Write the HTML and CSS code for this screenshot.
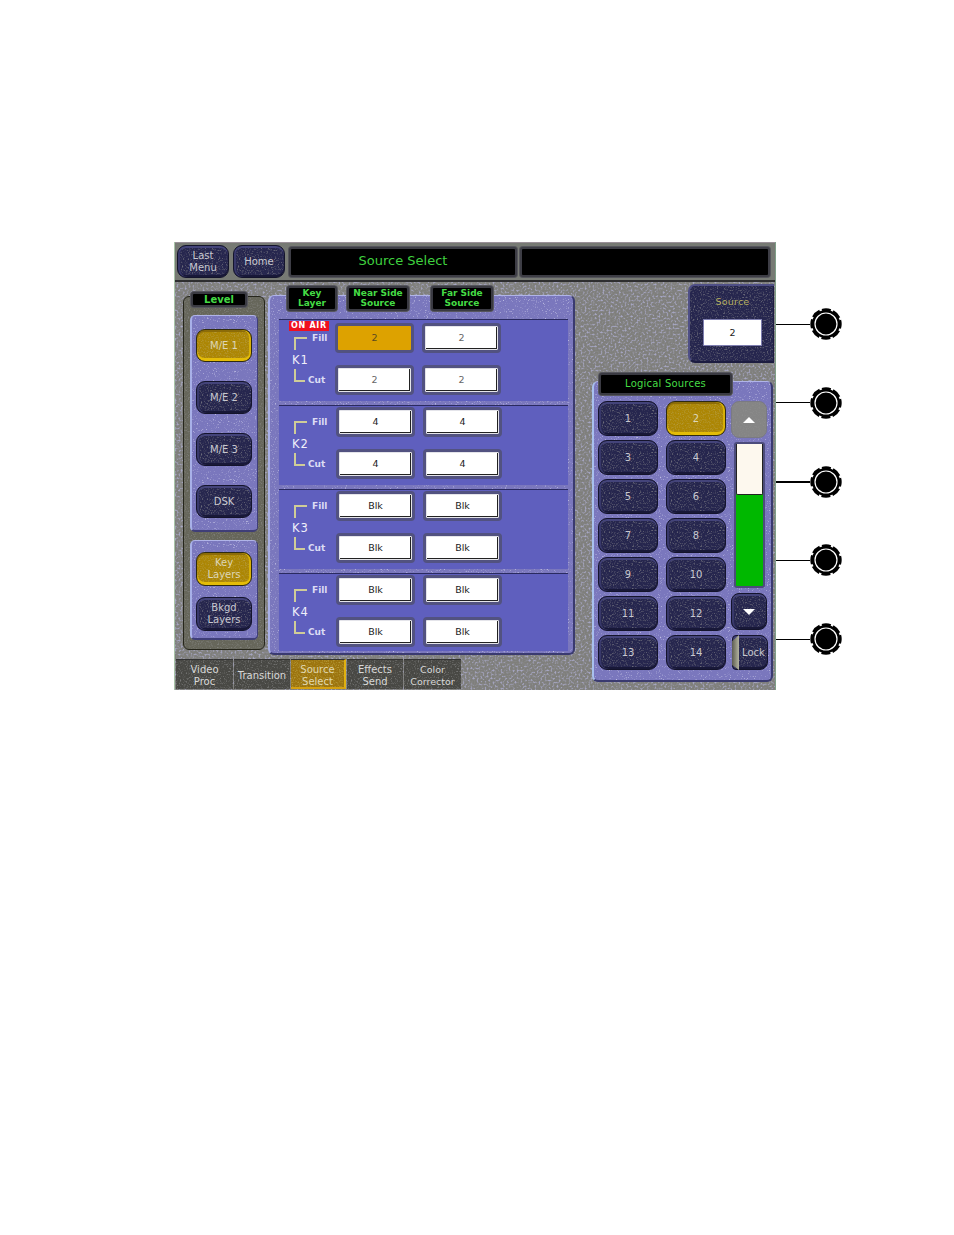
FILE: index.html
```html
<!DOCTYPE html>
<html lang="en">
<head>
<meta charset="utf-8">
<title>Source Select</title>
<link rel="stylesheet" href="styles.css">
</head>
<body>
<svg class="defs" width="0" height="0" aria-hidden="true">
  <symbol id="knob" viewBox="0 0 32 32">
    <circle cx="16" cy="16" r="14" fill="#000"/>
    <circle cx="16" cy="16" r="14.4" fill="none" stroke="#000" stroke-width="2.6" stroke-dasharray="8.9 2.4" stroke-dashoffset="4.45"/>
    <circle cx="16" cy="16" r="11" fill="none" stroke="#fff" stroke-width="1.2"/>
  </symbol>
</svg>
<div class="page">
  <div class="screen">
    <header class="topbar">
      <button class="btn btn-last">Last<br>Menu</button>
      <button class="btn btn-home">Home</button>
      <div class="display display-title">Source Select</div>
      <div class="display display-blank"></div>
    </header>
    <div class="workspace">
      <div class="left-col">
        <div class="upper">
          <aside class="level">
            <div class="tag tag-level">Level</div>
            <div class="level-group level-group-a">
              <button class="btn btn-side on">M/E 1</button>
              <button class="btn btn-side">M/E 2</button>
              <button class="btn btn-side">M/E 3</button>
              <button class="btn btn-side">DSK</button>
            </div>
            <div class="level-group level-group-b">
              <button class="btn btn-side btn-tall on">Key<br>Layers</button>
              <button class="btn btn-side btn-tall">Bkgd<br>Layers</button>
            </div>
          </aside>
          <section class="keys">
            <div class="tag tag-key">Key<br>Layer</div>
            <div class="tag tag-near">Near Side<br>Source</div>
            <div class="tag tag-far">Far Side<br>Source</div>
            <div class="key-row key-row-first">
              <div class="on-air">ON AIR</div>
              <div class="key-label">
                <div class="key-line key-line-fill"><span class="bracket bracket-top"></span><span class="key-text">Fill</span></div>
                <div class="key-name">K1</div>
                <div class="key-line key-line-cut"><span class="bracket bracket-bottom"></span><span class="key-text">Cut</span></div>
              </div>
              <div class="cells">
                <div class="cell cell-on">2</div><div class="cell cell-grey">2</div>
                <div class="cell cell-grey">2</div><div class="cell cell-grey">2</div>
              </div>
            </div>
            <div class="key-row">
              <div class="key-label">
                <div class="key-line key-line-fill"><span class="bracket bracket-top"></span><span class="key-text">Fill</span></div>
                <div class="key-name">K2</div>
                <div class="key-line key-line-cut"><span class="bracket bracket-bottom"></span><span class="key-text">Cut</span></div>
              </div>
              <div class="cells">
                <div class="cell">4</div><div class="cell">4</div>
                <div class="cell">4</div><div class="cell">4</div>
              </div>
            </div>
            <div class="key-row">
              <div class="key-label">
                <div class="key-line key-line-fill"><span class="bracket bracket-top"></span><span class="key-text">Fill</span></div>
                <div class="key-name">K3</div>
                <div class="key-line key-line-cut"><span class="bracket bracket-bottom"></span><span class="key-text">Cut</span></div>
              </div>
              <div class="cells">
                <div class="cell">Blk</div><div class="cell">Blk</div>
                <div class="cell">Blk</div><div class="cell">Blk</div>
              </div>
            </div>
            <div class="key-row key-row-last">
              <div class="key-label">
                <div class="key-line key-line-fill"><span class="bracket bracket-top"></span><span class="key-text">Fill</span></div>
                <div class="key-name">K4</div>
                <div class="key-line key-line-cut"><span class="bracket bracket-bottom"></span><span class="key-text">Cut</span></div>
              </div>
              <div class="cells">
                <div class="cell">Blk</div><div class="cell">Blk</div>
                <div class="cell">Blk</div><div class="cell">Blk</div>
              </div>
            </div>
          </section>
        </div>
        <nav class="tabs">
          <div class="tab tab-a">Video<br>Proc</div>
          <div class="tab tab-b">Transition</div>
          <div class="tab tab-c tab-on">Source<br>Select</div>
          <div class="tab tab-b">Effects<br>Send</div>
          <div class="tab tab-a">Color<br>Corrector</div>
        </nav>
      </div>
      <div class="right-col">
        <div class="source">
          <div class="source-label">Source</div>
          <div class="source-value">2</div>
        </div>
        <section class="logical">
          <div class="tag tag-logical">Logical Sources</div>
          <div class="pad">
            <button class="btn btn-num">1</button>
            <button class="btn btn-num on">2</button>
            <button class="btn btn-num">3</button>
            <button class="btn btn-num">4</button>
            <button class="btn btn-num">5</button>
            <button class="btn btn-num">6</button>
            <button class="btn btn-num">7</button>
            <button class="btn btn-num">8</button>
            <button class="btn btn-num">9</button>
            <button class="btn btn-num">10</button>
            <button class="btn btn-num">11</button>
            <button class="btn btn-num">12</button>
            <button class="btn btn-num">13</button>
            <button class="btn btn-num">14</button>
          </div>
          <div class="scroller">
            <button class="btn btn-arrow btn-up" aria-label="Up"><span class="tri tri-up"></span></button>
            <div class="track"><div class="thumb"></div></div>
            <button class="btn btn-arrow btn-down" aria-label="Down"><span class="tri tri-down"></span></button>
            <button class="btn btn-lock">Lock</button>
          </div>
        </section>
      </div>
    </div>
  </div>
  <div class="callouts">
    <div class="callout"><span class="lead"></span><svg class="knob"><use href="#knob"/></svg></div>
    <div class="callout"><span class="lead"></span><svg class="knob"><use href="#knob"/></svg></div>
    <div class="callout"><span class="lead lead-thick"></span><svg class="knob"><use href="#knob"/></svg></div>
    <div class="callout"><span class="lead"></span><svg class="knob"><use href="#knob"/></svg></div>
    <div class="callout"><span class="lead"></span><svg class="knob"><use href="#knob"/></svg></div>
  </div>
</div>
</body>
</html>
```
FILE: styles.css
```css
:root {
  --n-light: url("data:image/svg+xml,%3Csvg xmlns='http://www.w3.org/2000/svg' width='160' height='160'%3E%3Cfilter id='n'%3E%3CfeTurbulence type='fractalNoise' baseFrequency='.9' numOctaves='2' stitchTiles='stitch'/%3E%3CfeColorMatrix values='0 0 0 0 .8 0 0 0 0 .8 0 0 0 0 .95 2.4 0 0 0 -1.45'/%3E%3C/filter%3E%3Crect width='160' height='160' filter='url(%23n)'/%3E%3C/svg%3E");
  --n-dark: url("data:image/svg+xml,%3Csvg xmlns='http://www.w3.org/2000/svg' width='160' height='160'%3E%3Cfilter id='n'%3E%3CfeTurbulence type='fractalNoise' baseFrequency='.7' numOctaves='2' stitchTiles='stitch'/%3E%3CfeColorMatrix values='0 0 0 0 .28 0 0 0 0 .28 0 0 0 0 .28 2 0 0 0 -1.02'/%3E%3C/filter%3E%3Crect width='160' height='160' filter='url(%23n)'/%3E%3C/svg%3E");
  --n-gray: url("data:image/svg+xml,%3Csvg xmlns='http://www.w3.org/2000/svg' width='200' height='200'%3E%3Cfilter id='n'%3E%3CfeTurbulence type='fractalNoise' baseFrequency='.5' numOctaves='2' stitchTiles='stitch'/%3E%3CfeColorMatrix values='0 0 0 0 .38 0 0 0 0 .38 0 0 0 0 .54 3.4 0 0 0 -1.6'/%3E%3C/filter%3E%3Crect width='200' height='200' filter='url(%23n)'/%3E%3C/svg%3E");
  --n-gold: url("data:image/svg+xml,%3Csvg xmlns='http://www.w3.org/2000/svg' width='160' height='160'%3E%3Cfilter id='n'%3E%3CfeTurbulence type='fractalNoise' baseFrequency='.8' numOctaves='2' stitchTiles='stitch'/%3E%3CfeColorMatrix values='0 0 0 0 .46 0 0 0 0 .32 0 0 0 0 .04 3 0 0 0 -1.4'/%3E%3C/filter%3E%3Crect width='160' height='160' filter='url(%23n)'/%3E%3C/svg%3E");
  --periwinkle: #7a77bd;
  --navy: #26264e;
}
* { box-sizing: border-box; }
html, body { margin: 0; background: #fff; }
body { font-family: "DejaVu Sans", sans-serif; overflow: hidden; height: 1235px; }
.defs { position: absolute; }
.page { display: flex; align-items: flex-start; padding: 242px 0 0 174px; }

.screen {
  width: 602px; height: 448px; flex: none;
  display: flex; flex-direction: column;
  background: #7f7f7c var(--n-gray);
  border-left: 1px solid #a8c4a8;
  border-right: 1px solid #7f9f88;
}

.topbar {
  height: 40px; flex: none;
  display: flex; gap: 4px; padding: 2px 3px 0 2px;
  background: #777a74;
  border-top: 1px solid #9a9098;
  border-bottom: 2px solid #2e2e30;
}
.display {
  height: 30px; margin-top: 2px;
  background: #000;
  border: 2px solid #3d3d45;
  border-radius: 3px;
  box-shadow: 0 0 0 1px #55555c;
}
.display-title {
  width: 228px; color: #3fd13f;
  font-size: 13px; line-height: 24px; text-align: center;
}
.display-blank { width: 250px; margin-left: -1px; }

.btn {
  display: block; padding: 0; margin: 0;
  font: 10px/12px "DejaVu Sans", sans-serif; text-align: center;
  color: #c8c8d0;
  background: var(--navy) var(--n-dark);
  border: 1px solid #14142c;
  border-radius: 9px;
  box-shadow: inset 0 2px 0 #44447a, inset 2px 0 0 #38386a, inset 0 -2px 0 #181838;
}
.btn.on {
  background: #ac8604 var(--n-gold);
  color: #ddd6b8;
  border-color: #2e2a10;
  box-shadow: inset 0 -3px 0 #e4bc08, inset -2px 0 0 #d8b008, inset 0 2px 0 #8c6c08;
}
.btn-last { width: 52px; height: 33px; }
.btn-home { width: 52px; height: 33px; }

.workspace { flex: 1; display: flex; min-height: 0; }
.left-col { width: 401px; flex: none; display: flex; flex-direction: column; }
.upper { height: 377px; flex: none; display: flex; align-items: flex-start; padding-left: 8px; }

.level {
  position: relative; flex: none;
  width: 82px; height: 354px; margin-top: 14px;
  padding: 18px 0 0 6px;
  background: #66665a var(--n-dark);
  border: 1px solid #26261c;
  border-radius: 6px;
}
.level-group {
  width: 68px;
  background: var(--periwinkle) var(--n-light);
  border-radius: 5px;
  border-left: 2px solid #a8b0e8;
  border-top: 1px solid #b0b4e8;
  border-bottom: 2px solid #3f3e78;
  border-right: 1px solid #3f3e78;
  display: flex; flex-direction: column; align-items: flex-start;
  padding-left: 4px;
}
.level-group-a { height: 217px; padding-top: 13px; gap: 19px; }
.level-group-b { height: 100px; padding-top: 11px; gap: 11px; margin-top: 8px; }
.btn-side { width: 56px; height: 33px; flex: none; }
.btn-tall { height: 34px; }

.tag {
  position: absolute;
  background: #000;
  color: #45dc45;
  border: 2px solid #3a3a42;
  box-shadow: 0 0 0 1px #55555c;
  border-radius: 3px;
  font-size: 9px; line-height: 10px; font-weight: 700; text-align: center;
}
.tag-level { left: 7px; top: -5px; width: 56px; height: 15px; font-size: 10px; line-height: 11px; }
.tag-key { left: 17px; top: -10px; width: 50px; height: 25px; }
.tag-near { left: 77px; top: -10px; width: 62px; height: 25px; }
.tag-far { left: 161px; top: -10px; width: 62px; height: 25px; }
.tag-logical { left: 5px; top: -9px; width: 133px; height: 22px; font-size: 10px; font-weight: 400; line-height: 17px; letter-spacing: .2px; }

.keys {
  position: relative; flex: none;
  width: 307px; height: 360px; margin: 13px 0 0 3px;
  padding: 23px 5px 0 9px;
  display: flex; flex-direction: column; gap: 4px;
  background: var(--periwinkle) var(--n-light);
  border-left: 2px solid #a8b0e8;
  border-top: 1px solid #b0b4e8;
  border-right: 2px solid #3a3a70;
  border-bottom: 2px solid #3a3a70;
  border-radius: 6px;
}
.key-row {
  position: relative; flex: none;
  height: 80px; padding-top: 1px;
  display: flex;
  background: #5f5fbe;
  border-top: 1px solid #2a2a60;
}
.key-row-first { height: 82px; padding-top: 3px; }
.key-row-last { height: 78px; }
.on-air {
  position: absolute; left: 10px; top: 1px;
  width: 40px; height: 10px;
  background: #f01020; color: #fff;
  font-size: 8px; line-height: 10px; font-weight: 700; text-align: center; letter-spacing: .7px;
}
.key-label { width: 57px; flex: none; color: #eef; }
.key-row-first .key-label { width: 56px; }
.key-line { display: flex; padding-left: 15px; }
.key-line-fill { margin-top: 9px; height: 18px; gap: 5px; }
.key-line-cut { height: 18px; gap: 3px; }
.key-text { font-size: 9px; line-height: 12px; font-weight: 700; color: #dcdcf4; }
.key-line-cut .key-text { margin-top: 5px; }
.bracket { width: 13px; height: 13px; flex: none; border-left: 2px solid #cfcc98; }
.bracket-top { margin-top: 5px; border-top: 2px solid #cfcc98; }
.bracket-bottom { height: 13px; width: 11px; border-bottom: 2px solid #cfcc98; }
.key-name { margin: 4px 0 3px 13px; font-size: 11.5px; line-height: 12px; letter-spacing: 1px; color: #f0f0fa; }

.cells { display: grid; grid-template-columns: 79px 79px; grid-auto-rows: 30px; gap: 12px 8px; }
.cell {
  background: #fff; color: #222;
  border: 3px solid #525280;
  box-shadow: inset 0 0 0 1px #e4e4ea, inset -1px -1px 0 1px #222;
  border-radius: 4px;
  font-size: 9.5px; line-height: 24px; text-align: center;
}
.cell-grey { color: #666; }
.cell-on { background: #dda200; color: #5a4a20; box-shadow: none; }

.tabs { height: 30px; flex: none; display: flex; gap: 1px; padding-left: 1px; }
.tab {
  height: 30px; flex: none; padding-top: 4px;
  background: #484844 var(--n-dark);
  border-top: 1px solid #333;
  color: #d8d8d8; font-size: 10px; line-height: 12px; text-align: center;
}
.tab-a { width: 57px; }
.tab-b { width: 56px; }
.tab-c { width: 55px; }
.tab-b:nth-child(2) { padding-top: 10px; }
.tab-on { background: #9c740e var(--n-gold); color: #e0d8b0; border-right: 2px solid #e0b010; border-bottom: 2px solid #d4a010; }
.tabs .tab:last-child { font-size: 9.5px; }

.right-col { flex: 1; padding-left: 16px; }
.source {
  width: 86px; height: 79px; margin: 2px 0 0 96px;
  padding: 10px 0 0 13px;
  background: var(--navy) var(--n-dark);
  border-radius: 7px 0 0 7px;
  border-top: 2px solid #4f4f86;
  border-left: 2px solid #4f4f86;
  border-bottom: 2px solid #1c1c40;
  box-shadow: inset -1px 0 0 #1c1c40;
}
.source-label { color: #b7b060; font-size: 9.5px; line-height: 12px; text-align: center; margin-right: 12px; letter-spacing: .2px; }
.source-value {
  width: 59px; height: 27px; margin-top: 11px;
  background: #fff; color: #222;
  border: 1px solid #7f7fb0;
  font-size: 9.5px; line-height: 25px; text-align: center;
}
.logical {
  position: relative;
  width: 181px; height: 301px; margin-top: 18px;
  padding: 19px 0 0 4px;
  display: flex;
  background: var(--periwinkle) var(--n-light);
  border-left: 2px solid #a8c0ee;
  border-top: 1px solid #b0b4e8;
  border-right: 2px solid #3a3a70;
  border-bottom: 2px solid #3a3a70;
  border-radius: 6px;
}
.pad { display: grid; grid-template-columns: 60px 60px; grid-auto-rows: 35px; gap: 4px 8px; flex: none; }
.btn-num { width: 100%; height: 100%; }
.scroller { margin-left: 5px; width: 36px; }
.btn-arrow { width: 36px; height: 37px; position: relative; border-radius: 8px; }
.btn-up { background: #858585 var(--n-dark); border-color: #7a7a82; box-shadow: none; }
.btn-down { margin-top: 5px; }
.tri { display: block; width: 0; height: 0; margin: 0 auto; border-left: 6px solid transparent; border-right: 6px solid transparent; }
.tri-up { border-bottom: 6px solid #fff; }
.tri-down { border-top: 6px solid #fff; }
.track {
  width: 31px; height: 146px; margin: 4px 0 0 3px;
  background: #00b800;
  border: 2px solid #4c4c7c;
  border-radius: 3px;
}
.thumb { height: 51px; background: #fdf8ee; border: 1px solid #222; border-top: 0; border-radius: 0 0 2px 2px; }
.btn-lock {
  position: relative;
  width: 36px; height: 35px; margin: 5px 0 0 1px;
  padding-left: 7px;
  border-radius: 4px 8px 8px 4px;
}
.btn-lock::before {
  content: ""; position: absolute; left: -1px; top: -1px; bottom: -1px; width: 7px;
  background: linear-gradient(90deg, #5c5c50, #b4b4a0);
  clip-path: polygon(0 18%, 100% 0, 100% 100%, 0 86%);
}

.callouts { display: flex; flex-direction: column; gap: 46.75px; padding-top: 66px; }
.callout { display: flex; align-items: center; height: 32px; }
.lead { width: 34px; height: 1px; background: #000; }
.lead-thick { height: 2px; }
.knob { width: 32px; height: 32px; flex: none; }
```
